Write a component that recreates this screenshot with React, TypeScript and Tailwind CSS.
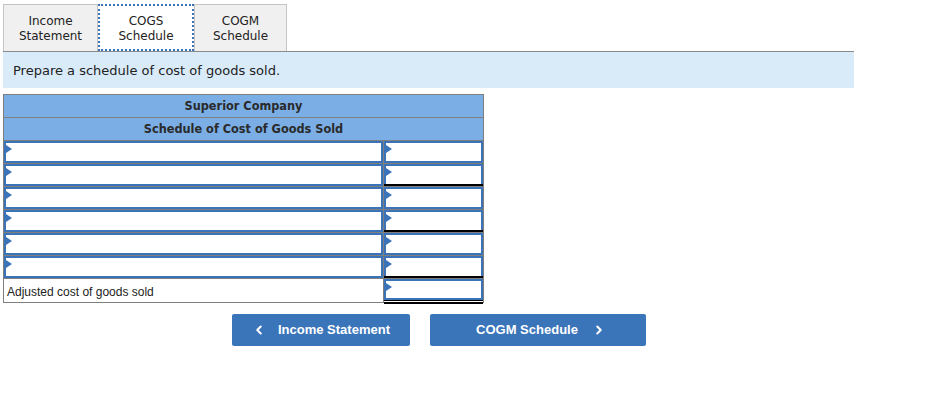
import { ChevronLeft, ChevronRight } from "lucide-react";

const rows = [
  { under: "none" },
  { under: "single" },
  { under: "none" },
  { under: "single" },
  { under: "none" },
  { under: "single" },
];

function Marker() {
  return (
    <span className="absolute left-0 top-[2px] w-0 h-0 border-t-[4px] border-b-[4px] border-l-[6px] border-t-transparent border-b-transparent border-l-[#3b73b9]" />
  );
}

function InputCell({ className, under }: { className: string; under?: string }) {
  return (
    <div className={`relative h-[22px] border-l border-[#7f7f7f] ${className}`}>
      <div className="relative h-full border-2 border-[#3b73b9] bg-white">
        <Marker />
      </div>
      {under === "single" && <div className="absolute left-0 right-0 bottom-0 h-[2px] bg-black" />}
    </div>
  );
}

export default function App() {
  return (
    <div className="w-[939px] h-[402px] bg-white pl-[3px] pt-[4px]" style={{ fontFamily: '"DejaVu Sans", Verdana, sans-serif' }}>
      <div className="w-[851px]">
        <div className="flex h-[47px] text-[12px] leading-[15px] text-[#222]">
          <div className="w-[95px] flex items-center justify-center text-center pt-[2px] bg-[#f0f0f0] border border-b-0 border-[#c4c4c4]">
            Income<br />Statement
          </div>
          <div className="w-[96px] flex items-center justify-center text-center pt-[2px] bg-white border-2 border-dotted border-[#3b73b9]">
            COGS<br />Schedule
          </div>
          <div className="w-[93px] flex items-center justify-center text-center pt-[2px] bg-[#f0f0f0] border border-b-0 border-[#c4c4c4]">
            COGM<br />Schedule
          </div>
        </div>
        <div className="h-px bg-[#8a8a8a]" />
        <div className="h-[36px] bg-[#d9ebf9] flex items-center pl-[10px] pt-[2px] text-[13px] text-[#222]">
          Prepare a schedule of cost of goods sold.
        </div>
      </div>

      <div className="mt-[6px] w-[481px] border border-[#7f7f7f]">
        <div className="h-[23px] bg-[#7aaee5] flex items-center justify-center text-[12.6px] font-bold text-[#2a2a2a] border-b border-[#7f7f7f]" style={{ fontFamily: 'Tahoma, "DejaVu Sans Condensed", "DejaVu Sans", sans-serif' }}>
          Superior Company
        </div>
        <div className="h-[22px] bg-[#7aaee5] flex items-center justify-center text-[12.6px] font-bold text-[#2a2a2a]" style={{ fontFamily: 'Tahoma, "DejaVu Sans Condensed", "DejaVu Sans", sans-serif' }}>
          Schedule of Cost of Goods Sold
        </div>
        {rows.map((r, i) => (
          <div key={i} className="flex border-t border-[#7f7f7f]">
            <div className="relative h-[22px] w-[379px] border-2 border-[#3b73b9] bg-white">
              <Marker />
            </div>
            <InputCell className="w-[100px]" under={r.under} />
          </div>
        ))}
        <div className="flex border-t border-[#7f7f7f]">
          <div className="h-[23px] w-[379px] flex items-center pl-[3px] pt-[2px] text-[12px] text-[#222]" style={{ fontFamily: '"Liberation Sans", Arial, sans-serif' }}>
            Adjusted cost of goods sold
          </div>
          <div className="relative h-[23px] w-[100px] border-l border-[#7f7f7f]">
            <div className="relative h-[21px] border-2 border-[#3b73b9] bg-white">
              <Marker />
            </div>
            <div className="absolute left-0 right-0 top-[21px] h-px bg-black" />
            <div className="absolute left-0 right-0 top-[23px] h-[2px] bg-black" />
          </div>
        </div>
      </div>

      <div className="mt-[11px] ml-[229px] flex gap-[20px] text-[13px] font-bold text-white" style={{ fontFamily: '"Liberation Sans", Arial, sans-serif' }}>
        <button className="w-[178px] h-[32px] bg-[#3a75ba] rounded-[2px] flex items-center justify-center gap-[12px]">
          <ChevronLeft size={14} strokeWidth={3.5} />
          <span>Income Statement</span>
        </button>
        <button className="w-[216px] h-[32px] bg-[#3a75ba] rounded-[2px] flex items-center justify-center gap-[14px] pl-[6px]">
          <span>COGM Schedule</span>
          <ChevronRight size={14} strokeWidth={3.5} />
        </button>
      </div>
    </div>
  );
}
